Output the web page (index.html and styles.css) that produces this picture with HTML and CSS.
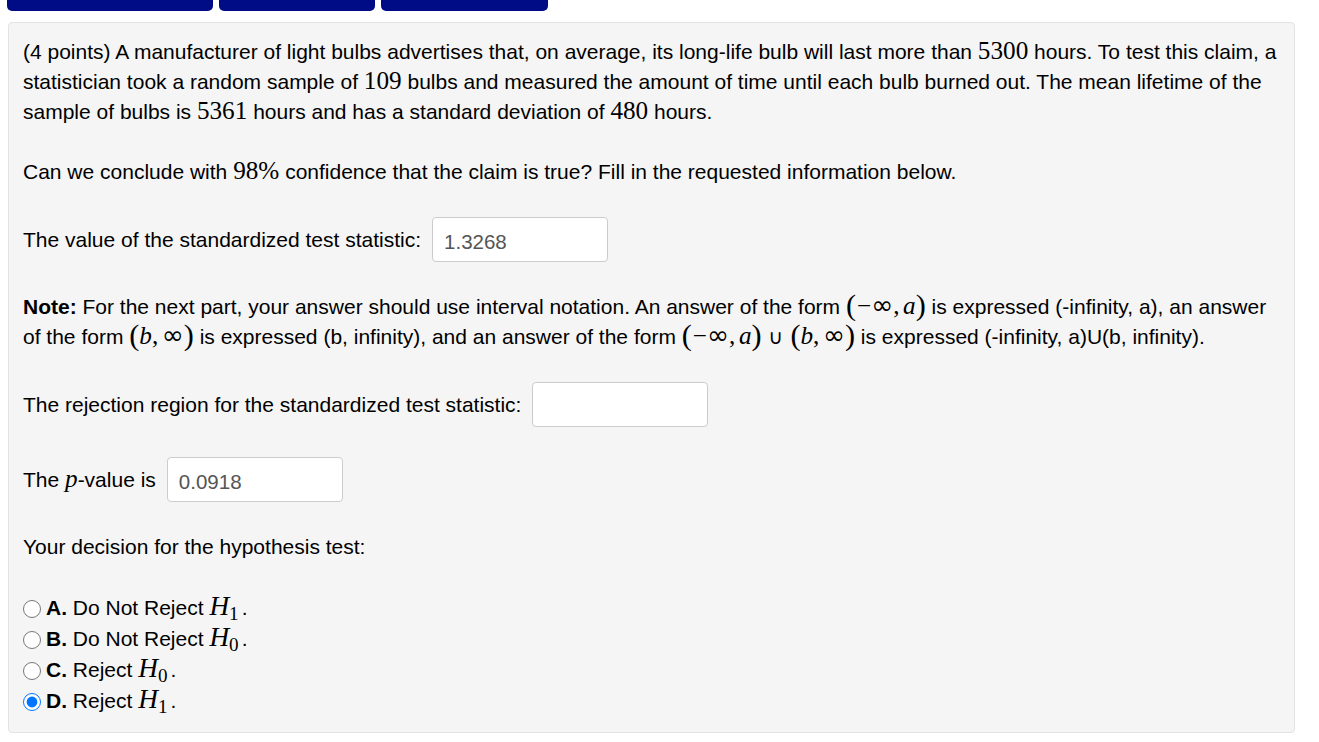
FILE: index.html
```html
<!DOCTYPE html>
<html lang="en">
<head>
    <meta charset="UTF-8">
    <title>Problem</title>
    <link rel="stylesheet" href="styles.css">
</head>
<body>
    <div class="tabs">
        <div class="tab tab-1"></div>
        <div class="tab tab-2"></div>
        <div class="tab tab-3"></div>
    </div>

    <div class="problem">
        <p class="text">(4 points) A manufacturer of light bulbs advertises that, on average, its long-life bulb will last more than <span class="m">5300</span> hours. To test this claim, a statistician took a random sample of <span class="m">109</span> bulbs and measured the amount of time until each bulb burned out. The mean lifetime of the sample of bulbs is <span class="m">5361</span> hours and has a standard deviation of <span class="m">480</span> hours.</p>

        <p class="text">Can we conclude with <span class="m">98%</span> confidence that the claim is true? Fill in the requested information below.</p>

        <div class="row">
            <span>The value of the standardized test statistic:</span>
            <input type="text" class="answer" value="1.3268">
        </div>

        <p class="text"><b>Note:</b> For the next part, your answer should use interval notation. An answer of the form <span class="m"><span class="paren">(</span><span class="minus">&minus;</span><span class="inf">&infin;</span><span class="comma">,</span><i>a</i><span class="paren">)</span></span> is expressed (-infinity, a), an answer of the form <span class="m"><span class="paren">(</span><i>b</i><span class="comma">,</span><span class="inf">&infin;</span><span class="paren">)</span></span> is expressed (b, infinity), and an answer of the form <span class="m"><span class="paren">(</span><span class="minus">&minus;</span><span class="inf">&infin;</span><span class="comma">,</span><i>a</i><span class="paren">)</span><span class="cup">&cup;</span><span class="paren">(</span><i>b</i><span class="comma">,</span><span class="inf">&infin;</span><span class="paren">)</span></span> is expressed (-infinity, a)U(b, infinity).</p>

        <div class="row">
            <span>The rejection region for the standardized test statistic:</span>
            <input type="text" class="answer" value="">
        </div>

        <div class="row">
            <span>The <span class="m"><i>p</i></span>-value is</span>
            <input type="text" class="answer" value="0.0918">
        </div>

        <p class="text">Your decision for the hypothesis test:</p>

        <div class="choices">
            <label class="choice"><input type="radio" name="decision"><b>A.</b> Do Not Reject <span class="m hyp"><i>H</i><sub>1</sub></span>.</label>
            <label class="choice"><input type="radio" name="decision"><b>B.</b> Do Not Reject <span class="m hyp"><i>H</i><sub>0</sub></span>.</label>
            <label class="choice"><input type="radio" name="decision"><b>C.</b> Reject <span class="m hyp"><i>H</i><sub>0</sub></span>.</label>
            <label class="choice"><input type="radio" name="decision" checked><b>D.</b> Reject <span class="m hyp"><i>H</i><sub>1</sub></span>.</label>
        </div>
    </div>
</body>
</html>
```

FILE: styles.css
```css
body {
    margin: 0;
    padding: 0 24px 0 8px;
    font-family: "Liberation Sans", Arial, sans-serif;
    font-size: 21px;
    color: #000;
    background-color: #fff;
}

.tabs {
    display: flex;
    gap: 6px;
    height: 11px;
    margin-left: -1px;
    margin-bottom: 11px;
}

.tab {
    background-color: #000c86;
    border-radius: 0 0 5px 5px;
}

.tab-1 { width: 206px; }
.tab-2 { width: 156px; }
.tab-3 { width: 167px; }

.problem {
    background-color: #f5f5f5;
    border: 1px solid #e3e3e3;
    border-radius: 4px;
    padding: 14px 14px 16px 14px;
}

.text {
    margin: 0 0 30px 0;
    line-height: 30px;
}

.row {
    display: flex;
    align-items: center;
    gap: 11px;
    height: 45px;
    margin-bottom: 30px;
}

.answer {
    width: 176px;
    height: 45px;
    box-sizing: border-box;
    padding: 4px 11px 0 11px;
    border: 1px solid #ccc;
    border-radius: 4px;
    background-color: #fff;
    color: #555;
    font-family: "Liberation Sans", Arial, sans-serif;
    font-size: 20.5px;
}

/* math, drawn with a serif face like the typeset formulas */
.m {
    font-family: "Liberation Serif", "DejaVu Serif", serif;
    font-size: 1.2em;
    line-height: 0;
}

.m i {
    font-style: italic;
}

.m sub {
    font-size: 0.7em;
    font-style: normal;
    vertical-align: -0.25em;
    line-height: 0;
}

.paren {
    font-size: 1.2em;
    line-height: 0;
    vertical-align: -0.04em;
}

.minus {
    margin-left: 1px;
}

.inf {
    font-family: "DejaVu Sans", sans-serif;
    font-size: 1.05em;
}

.comma {
    margin-right: 0.14em;
}

.cup {
    font-family: "DejaVu Sans", sans-serif;
    font-size: 0.8em;
    margin: 0 0.35em;
}

.choices {
    display: flex;
    flex-direction: column;
}

.choice {
    display: block;
    height: 31px;
    line-height: 31px;
}

.choice input {
    width: 18px;
    height: 18px;
    margin: 0 5px 0 0;
    vertical-align: -3px;
}

.hyp {
    font-size: 1.3em;
    margin-right: 3px;
}
```
